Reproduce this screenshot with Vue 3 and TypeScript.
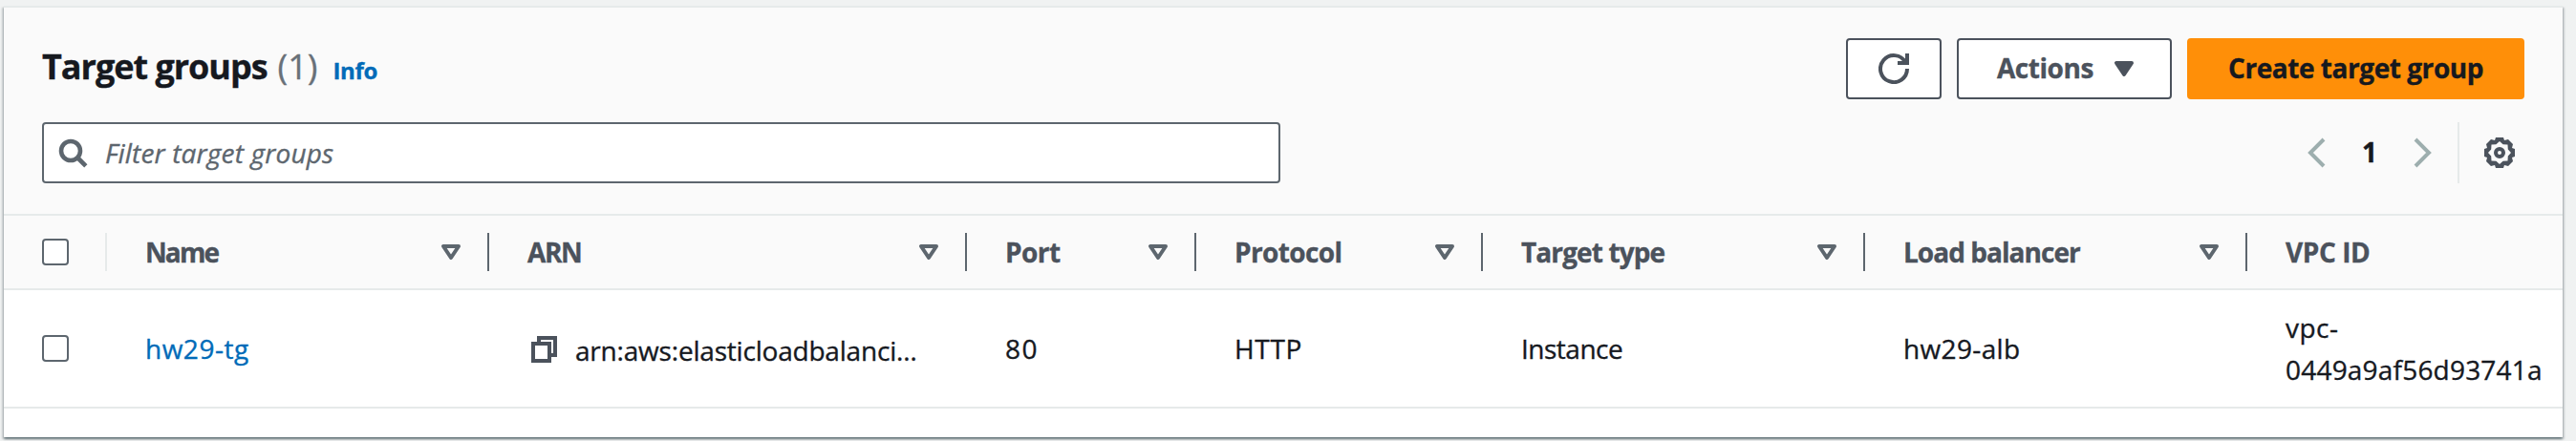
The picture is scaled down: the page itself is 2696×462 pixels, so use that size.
<script setup lang="ts">
interface Column {
  key: string
  label: string
  sortable: boolean
}

interface TargetGroup {
  name: string
  arn: string
  port: number
  protocol: string
  targetType: string
  loadBalancer: string
  vpcPrefix: string
  vpcSuffix: string
}

const columns: Column[] = [
  { key: 'name', label: 'Name', sortable: true },
  { key: 'arn', label: 'ARN', sortable: true },
  { key: 'port', label: 'Port', sortable: true },
  { key: 'protocol', label: 'Protocol', sortable: true },
  { key: 'type', label: 'Target type', sortable: true },
  { key: 'balancer', label: 'Load balancer', sortable: true },
  { key: 'vpc', label: 'VPC ID', sortable: false },
]

const groups: TargetGroup[] = [
  {
    name: 'hw29-tg',
    arn: 'arn:aws:elasticloadbalanci…',
    port: 80,
    protocol: 'HTTP',
    targetType: 'Instance',
    loadBalancer: 'hw29-alb',
    vpcPrefix: 'vpc-',
    vpcSuffix: '0449a9af56d93741a',
  },
]
</script>

<template>
  <main class="page">
    <section class="card">
      <header class="head">
        <div class="title-row">
          <h1 class="title">Target groups</h1>
          <span class="count">({{ groups.length }})</span>
          <a class="info">Info</a>
          <div class="actions">
            <button class="btn refresh" aria-label="Refresh">
              <svg class="icon" viewBox="0 0 16 16">
                <path d="M10 5h5V0" />
                <path d="M15 8a7 7 0 1 1-.9-3.4" />
              </svg>
            </button>
            <button class="btn menu">
              <span>Actions</span>
              <svg class="icon solid" viewBox="0 0 16 16"><path d="M4 5h8l-4 6z" /></svg>
            </button>
            <button class="btn primary"><span>Create target group</span></button>
          </div>
        </div>
        <div class="filter-row">
          <div class="search">
            <svg class="icon" viewBox="0 0 16 16">
              <circle cx="7" cy="7" r="5" />
              <path d="m10.500 10.500 4.400 4.400" />
            </svg>
            <span class="placeholder">Filter target groups</span>
          </div>
          <nav class="pager">
            <svg class="icon arrow" viewBox="0 0 16 16"><path d="M12 1 5 8l7 7" /></svg>
            <span class="page-no">1</span>
            <svg class="icon arrow" viewBox="0 0 16 16"><path d="m4 1 7 7-7 7" /></svg>
          </nav>
          <div class="prefs">
            <svg class="icon gear" viewBox="0 0 32 32">
              <path
                class="rim"
                d="M12 0H20L21 3L25 2L30 7L29 11L32 12V20L29 21L30 25L25 30L21 29L20 32H12L11 29L7 30L2 25L3 21L0 20V12L3 11L2 7L7 2L11 3ZM16 4L12.400 7.200L7.500 7.500L7.200 12.400L4 16L7.200 19.600L7.500 24.500L12.400 24.800L16 28L19.600 24.800L24.500 24.500L24.800 19.600L28 16L24.800 12.400L24.500 7.500L19.600 7.200Z"
              />
              <circle cx="16" cy="16" r="4" />
            </svg>
          </div>
        </div>
      </header>

      <div class="grid columns">
        <div class="check-cell"><span class="checkbox"></span></div>
        <div v-for="c in columns" :key="c.key" class="th" :class="c.key">
          <span>{{ c.label }}</span>
          <svg v-if="c.sortable" class="icon" viewBox="0 0 16 16"><path d="M4 5h8l-4 6z" /></svg>
        </div>
      </div>

      <div v-for="g in groups" :key="g.name" class="grid row">
        <div class="check-cell"><span class="checkbox"></span></div>
        <div class="td name"><a class="link">{{ g.name }}</a></div>
        <div class="td arn">
          <svg class="icon copy" viewBox="0 0 16 16">
            <path d="M2 5h8.500v9H2z" />
            <path d="M5 5V2h8.500v9h-3" />
          </svg>
          <span>{{ g.arn }}</span>
        </div>
        <div class="td port">{{ g.port }}</div>
        <div class="td protocol">{{ g.protocol }}</div>
        <div class="td type">{{ g.targetType }}</div>
        <div class="td balancer">{{ g.loadBalancer }}</div>
        <div class="td vpc">
          <span class="prefix">{{ g.vpcPrefix }}</span>
          <span>{{ g.vpcSuffix }}</span>
        </div>
      </div>
    </section>
  </main>
</template>

<style>
body {
  background: #f0f2f2;
}
</style>

<style scoped>
* {
  box-sizing: border-box;
}
.page {
  height: 462px;
  padding: 6px 14px 4px 4px;
  overflow: hidden;
  background: #f0f2f2;
  color: #16191f;
  font: 28px/44px 'Open Sans', 'Noto Sans', sans-serif;
  white-space: nowrap;
  -webkit-text-stroke: 0.35px currentColor;
}
.card {
  height: 452px;
  border-top: 2px solid #e6eaea;
  background: #fff;
  box-shadow: 0 2px 2px rgba(0, 28, 36, 0.4), 2px 2px 2px rgba(0, 28, 36, 0.15), -2px 2px 2px rgba(0, 28, 36, 0.15);
}
.icon {
  flex: none;
  width: 32px;
  height: 32px;
  fill: none;
  stroke: currentColor;
  stroke-width: 2;
}
.head {
  height: 218px;
  padding: 32px 40px 0;
  border-bottom: 2px solid #e6eaea;
  background: #fafafa;
}
.title-row {
  display: flex;
  align-items: baseline;
  height: 64px;
}
.title {
  margin: 0;
  font-size: 36px;
  line-height: 60px;
  font-weight: 700;
  letter-spacing: -1.02px;
}
.count {
  margin-left: 11px;
  font-size: 36px;
  color: #687078;
}
.info {
  margin-left: 16px;
  font-size: 24px;
  font-weight: 700;
  letter-spacing: -0.33px;
  color: #006bb8;
}
.actions {
  display: flex;
  align-self: flex-start;
  gap: 16px;
  margin-left: auto;
}
.btn {
  display: flex;
  align-items: center;
  height: 64px;
  padding: 0 0 2px;
  border: 2px solid #4b525c;
  border-radius: 4px;
  background: #fff;
  color: #4b525c;
  font: 700 28px/44px 'Open Sans', 'Noto Sans', sans-serif;
  letter-spacing: -0.45px;
}
.refresh {
  width: 100px;
  padding: 0 0 0 32px;
}
.menu {
  width: 225px;
  padding-left: 40px;
}
.menu .icon {
  margin: 2px 0 0 16px;
}
.solid {
  fill: currentColor;
}
.solid,
.th .icon {
  stroke-linejoin: round;
}
.primary {
  width: 353px;
  padding-left: 41px;
  border-color: #ff8f08;
  background: #ff8f08;
  color: #16191f;
}
.filter-row {
  display: flex;
  align-items: center;
  height: 64px;
  margin-top: 24px;
}
.search {
  display: flex;
  align-items: center;
  width: 1296px;
  height: 64px;
  padding-left: 14px;
  border: 2px solid #5d666e;
  border-radius: 4px;
  background: #fff;
  color: #5d666e;
}
.search .icon {
  stroke-width: 2.3;
}
.placeholder {
  margin: 0 0 0 18px;
  font-style: italic;
  letter-spacing: 0.17px;
}
.pager {
  display: flex;
  align-items: center;
  margin-left: auto;
}
.arrow {
  color: #9daeae;
}
.page-no {
  width: 80px;
  margin-top: -2px;
  font-weight: 700;
  text-align: center;
}
.prefs {
  display: flex;
  align-items: center;
  height: 64px;
  margin-left: 20px;
  padding: 0 10px 0 26px;
  border-left: 2px solid #e6eaea;
  color: #4b525c;
}
.gear {
  stroke-width: 4;
}
.rim {
  fill: currentColor;
  fill-rule: evenodd;
  stroke: none;
}
.grid {
  display: grid;
  grid-template-columns: 108px 400px 500px 240px 300px 400px 400px 330px;
  align-items: center;
}
.columns {
  height: 78px;
  border-bottom: 2px solid #e6eaea;
  background: #fafafa;
}
.check-cell {
  display: flex;
  align-items: center;
  height: 40px;
  padding-left: 40px;
}
.columns .check-cell {
  border-right: 2px solid #e6eaea;
}
.checkbox {
  width: 28px;
  height: 28px;
  border: 2px solid #5d666e;
  border-radius: 4px;
  background: #fff;
}
.th {
  display: flex;
  align-items: center;
  justify-content: space-between;
  height: 40px;
  padding: 0 22px 0 40px;
  border-right: 2px solid #5d666e;
  color: #4b525c;
  font-weight: 700;
}
.th span {
  margin-top: -1px;
}
.th .icon {
  color: #5d666e;
}
.th.vpc {
  border-right: 0;
}
.th.name {
  letter-spacing: -1.9px;
}
.th.arn {
  letter-spacing: -1.4px;
}
.th.port {
  letter-spacing: -0.53px;
}
.th.protocol {
  letter-spacing: -0.63px;
}
.th.type {
  letter-spacing: -0.89px;
}
.th.balancer {
  letter-spacing: -0.96px;
}
.th.vpc {
  letter-spacing: -0.44px;
}
.row {
  height: 124px;
  border-bottom: 2px solid #e6eaea;
}
.td {
  padding-left: 40px;
}
.td.name {
  letter-spacing: 0.5px;
}
.link {
  color: #006bb8;
}
.td.arn {
  display: flex;
  align-items: center;
  padding-left: 42px;
  letter-spacing: -0.2px;
}
.td.arn span {
  margin: 4px 0 0 16px;
}
.copy {
  margin-top: 2px;
  color: #4b525c;
}
.td.port {
  letter-spacing: 1.5px;
}
.td.protocol {
  letter-spacing: 0.67px;
}
.td.type {
  letter-spacing: -0.5px;
}
.td.balancer {
  letter-spacing: 0.36px;
}
.td.vpc {
  display: flex;
  flex-direction: column;
  letter-spacing: 0.2px;
}
.prefix {
  letter-spacing: 0.5px;
}
</style>
